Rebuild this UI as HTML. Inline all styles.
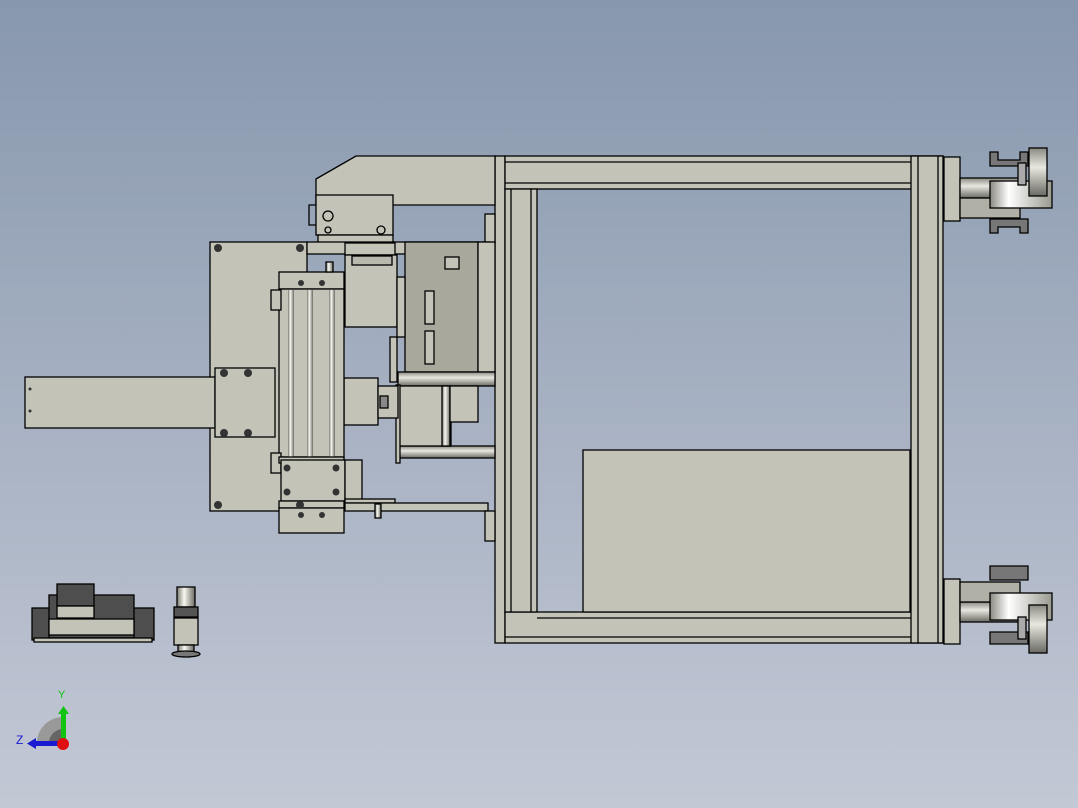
<!DOCTYPE html><html><head><style>html,body{margin:0;padding:0}body{width:1078px;height:808px;overflow:hidden;background:linear-gradient(#8797ad,#a9b3c4 55%,#c3c8d5);font-family:"Liberation Sans",sans-serif}</style></head><body>
<svg width="1078" height="808" viewBox="0 0 1078 808" xmlns="http://www.w3.org/2000/svg" style="display:block">
<defs>
<linearGradient id="rod" x1="0" y1="0" x2="0" y2="1"><stop offset="0" stop-color="#8a8a82"/><stop offset=".4" stop-color="#e8e8e0"/><stop offset="1" stop-color="#6a6a64"/></linearGradient>
<linearGradient id="rodv" x1="0" y1="0" x2="1" y2="0"><stop offset="0" stop-color="#7a7a72"/><stop offset=".4" stop-color="#f8f8f0"/><stop offset="1" stop-color="#6a6a64"/></linearGradient>
<linearGradient id="foot" x1="0" y1="0" x2="1" y2="0"><stop offset="0" stop-color="#8a8a80"/><stop offset=".3" stop-color="#ffffff"/><stop offset="1" stop-color="#9a9a90"/></linearGradient>
</defs>
<g stroke="#000" stroke-width="1.3" fill="#c3c3b8">
<rect x="495" y="156" width="10" height="487"/>
<rect x="505" y="156" width="438" height="33"/>
<rect x="505" y="612" width="438" height="31"/>
<rect x="505" y="189" width="32" height="423"/>
<rect x="911" y="156" width="32" height="487"/>
<line x1="918" y1="156" x2="918" y2="643"/><line x1="938" y1="156" x2="938" y2="643"/>
<line x1="505" y1="162" x2="911" y2="162"/><line x1="505" y1="183" x2="911" y2="183"/>
<line x1="511" y1="189" x2="511" y2="612"/><line x1="531" y1="189" x2="531" y2="612"/>
<line x1="505" y1="637" x2="911" y2="637"/><line x1="537" y1="618" x2="911" y2="618"/>
<rect x="583" y="450" width="327" height="162"/>
<rect x="944" y="157" width="16" height="64"/><rect x="944" y="579" width="16" height="65"/>
<rect x="960" y="178" width="60" height="20" fill="url(#rod)"/>
<rect x="960" y="602" width="60" height="20" fill="url(#rod)"/>
<rect x="960" y="198" width="60" height="20" fill="#b0b0a6"/>
<rect x="960" y="582" width="60" height="20" fill="#b0b0a6"/>
<rect x="990" y="181" width="62" height="27" fill="url(#foot)"/>
<rect x="990" y="593" width="62" height="27" fill="url(#foot)"/>
<rect x="1029" y="148" width="18" height="48" fill="url(#rod)"/>
<rect x="1029" y="605" width="18" height="48" fill="url(#rod)"/>
<path d="M990 152h8v8h22v-8h8v14h-38z" fill="#777"/>
<path d="M990 219h38v14h-8v-6h-22v6h-8z" fill="#777"/>
<path d="M990 566h38v14h-38z" fill="#777"/>
<path d="M990 632h38v12h-38z" fill="#777"/>
<rect x="1018" y="163" width="8" height="22" fill="#aaa"/><rect x="1018" y="617" width="8" height="22" fill="#aaa"/>
<path d="M316 179 L356 156 H495 V205 H316 Z"/>
<rect x="316" y="195" width="77" height="40"/>
<rect x="318" y="235" width="75" height="8"/>
<circle cx="328" cy="216" r="5" fill="none"/><circle cx="328" cy="230" r="3" fill="none"/><circle cx="381" cy="230" r="4" fill="none"/>
<path d="M316 205h-7v20h7" fill="none"/>
<rect x="485" y="214" width="10" height="29"/>
<rect x="210" y="242" width="97" height="269"/>
<rect x="307" y="242" width="183" height="12"/>
<rect x="345" y="243" width="50" height="12"/>
<rect x="345" y="255" width="52" height="72"/>
<rect x="352" y="256" width="40" height="9" fill="#b8b8ac"/>
<rect x="405" y="242" width="73" height="130" fill="#a8a89c"/>
<rect x="478" y="242" width="17" height="130"/>
<rect x="445" y="257" width="14" height="12"/>
<rect x="425" y="291" width="9" height="33"/><rect x="425" y="331" width="9" height="33"/>
<rect x="397" y="277" width="8" height="60"/>
<rect x="390" y="337" width="7" height="45"/>
<rect x="398" y="372" width="97" height="14" fill="url(#rod)"/>
<rect x="398" y="446" width="97" height="12" fill="url(#rod)"/>
<rect x="398" y="386" width="53" height="60"/>
<rect x="442" y="386" width="8" height="60" fill="url(#rodv)"/>
<rect x="450" y="386" width="28" height="36"/>
<rect x="396" y="385" width="4" height="78"/>
<rect x="25" y="377" width="190" height="51"/>
<rect x="215" y="368" width="60" height="69"/>
<rect x="344" y="378" width="34" height="47"/>
<rect x="378" y="386" width="20" height="32"/>
<rect x="380" y="396" width="8" height="12" fill="#888"/>
<rect x="279" y="272" width="65" height="17"/>
<rect x="279" y="289" width="65" height="168"/>
<rect x="288" y="290" width="6" height="167" fill="url(#rodv)" stroke="none"/>
<rect x="307" y="290" width="6" height="167" fill="url(#rodv)" stroke="none"/>
<rect x="329" y="290" width="6" height="167" fill="url(#rodv)" stroke="none"/>
<rect x="271" y="290" width="10" height="20"/><rect x="271" y="453" width="10" height="20"/>
<rect x="279" y="457" width="65" height="6"/>
<rect x="281" y="460" width="64" height="41"/>
<rect x="345" y="460" width="17" height="41"/>
<rect x="279" y="501" width="65" height="7"/>
<rect x="279" y="508" width="65" height="25"/>
<rect x="345" y="499" width="50" height="4"/>
<rect x="345" y="503" width="143" height="8"/>
<rect x="485" y="511" width="10" height="30"/>
<rect x="375" y="504" width="6" height="14" fill="url(#rodv)"/>
<rect x="326" y="262" width="7" height="10" fill="url(#rodv)"/>
</g>
<g fill="#333">
<circle cx="218" cy="248" r="4"/><circle cx="300" cy="248" r="4"/><circle cx="218" cy="505" r="4"/><circle cx="300" cy="505" r="4"/>
<circle cx="224" cy="373" r="4"/><circle cx="248" cy="373" r="4"/><circle cx="224" cy="433" r="4"/><circle cx="248" cy="433" r="4"/>
<circle cx="287" cy="468" r="3.5"/><circle cx="336" cy="468" r="3.5"/><circle cx="287" cy="492" r="3.5"/><circle cx="336" cy="492" r="3.5"/>
<circle cx="301" cy="283" r="3"/><circle cx="322" cy="283" r="3"/><circle cx="301" cy="515" r="3"/><circle cx="322" cy="515" r="3"/>
<circle cx="30" cy="389" r="1.5"/><circle cx="30" cy="411" r="1.5"/>
</g>
<g stroke="#000" stroke-width="1.3">
<rect x="32" y="608" width="122" height="32" fill="#4e4e4e"/>
<rect x="49" y="595" width="85" height="43" fill="#4e4e4e"/>
<rect x="57" y="584" width="37" height="22" fill="#4e4e4e"/>
<rect x="57" y="606" width="37" height="12" fill="#c3c3b8"/>
<rect x="49" y="619" width="85" height="16" fill="#c3c3b8"/>
<rect x="34" y="638" width="118" height="4" fill="#c3c3b8"/>
<rect x="177" y="587" width="18" height="20" fill="url(#rodv)"/>
<rect x="174" y="607" width="24" height="10" fill="#555"/>
<rect x="174" y="618" width="24" height="27" fill="#c3c3b8"/>
<rect x="178" y="645" width="16" height="10" fill="url(#rodv)"/>
<ellipse cx="186" cy="654" rx="14" ry="3" fill="#777"/>
</g>
<path d="M37 743 A26 26 0 0 1 63 717 V743 Z" fill="#999"/>
<path d="M49 743 A14 14 0 0 1 63 729 V743 Z" fill="#666"/>
<rect x="61" y="712" width="5" height="30" fill="#12c412"/><path d="M58 714 L63.5 706 L69 714 Z" fill="#12c412"/>
<rect x="34" y="741" width="28" height="5" fill="#1a1ad0"/><path d="M36 738 L27 743.5 L36 749 Z" fill="#1a1ad0"/>
<circle cx="63" cy="744" r="6" fill="#e01010"/>
<text x="58" y="698" font-size="11" fill="#12c412">Y</text>
<text x="16" y="744" font-size="12" fill="#1a1ad0">Z</text>
</svg>
</body></html>
